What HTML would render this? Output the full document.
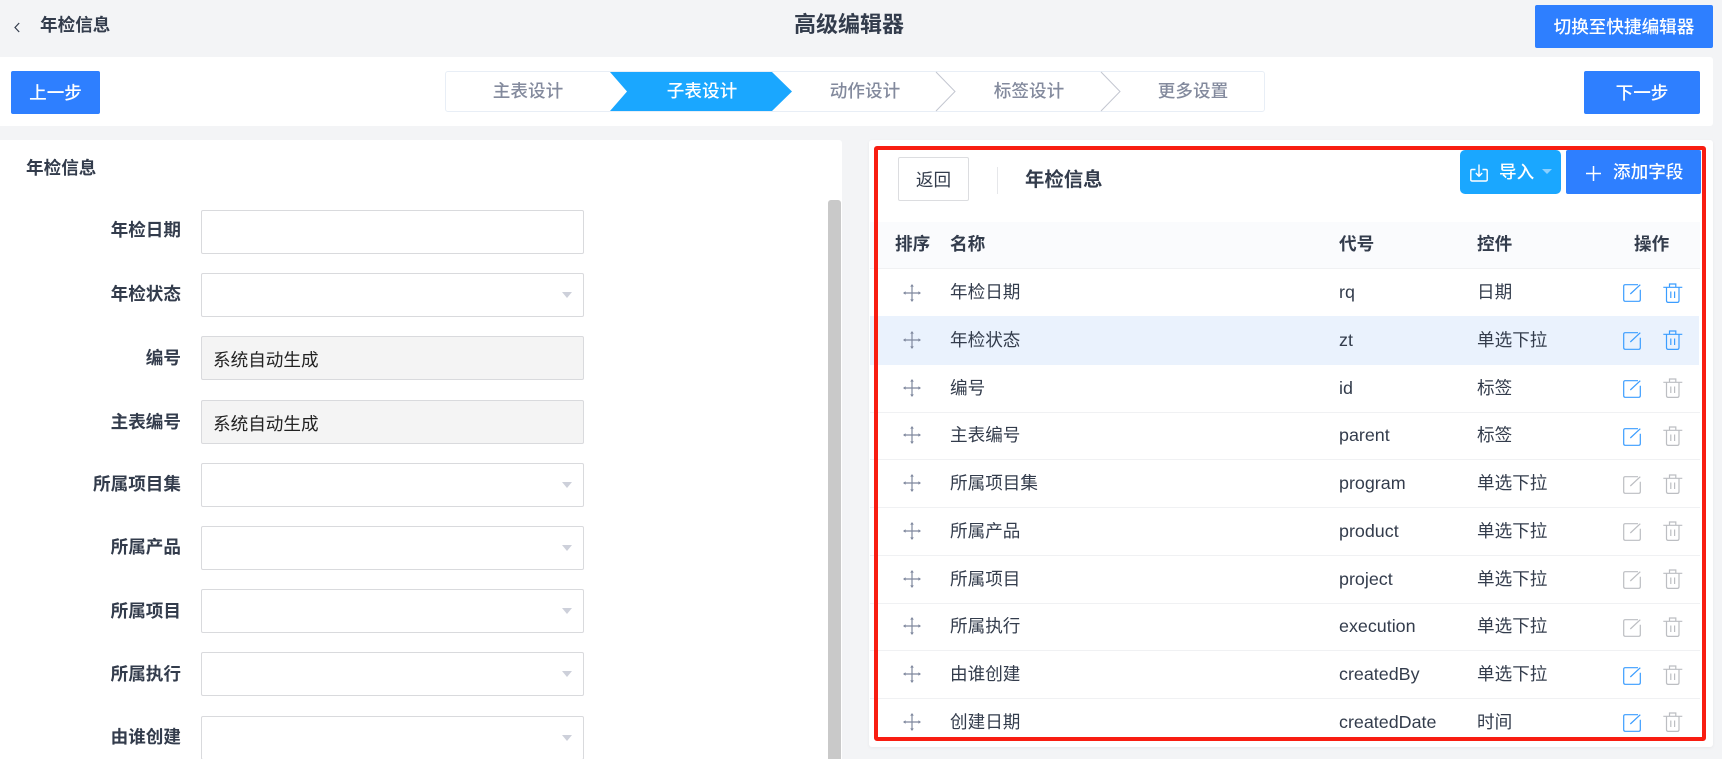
<!DOCTYPE html>
<html lang="zh-CN">
<head>
<meta charset="utf-8">
<title>高级编辑器</title>
<style>
html,body{margin:0;padding:0;width:1722px;height:759px;overflow:hidden;background:#f3f4f6;}
body{position:relative;font-family:"Liberation Sans","Noto Sans CJK SC",sans-serif;font-size:17.6px;color:#333c4c;}
.a{position:absolute;box-sizing:border-box;}
.t{position:absolute;white-space:nowrap;height:30px;line-height:30px;}
.b{font-weight:700;}
.m{font-weight:500;}
.w{color:#fff;}
.btn{position:absolute;box-sizing:border-box;background:#2e7fff;border-radius:2px;color:#fff;text-align:center;font-weight:500;}
.lab{position:absolute;left:60px;width:121px;text-align:right;height:30px;line-height:30px;font-weight:700;color:#333c4c;white-space:nowrap;}
.inp{position:absolute;left:201px;width:383px;height:44px;box-sizing:border-box;border:1px solid #d9dadd;border-radius:2px;background:#fff;}
.dis{background:#f4f4f4;line-height:46px;padding-left:11px;color:#222;}
.car{position:absolute;right:11px;top:18px;width:0;height:0;border-left:5px solid transparent;border-right:5px solid transparent;border-top:6px solid #cdd0da;}
.step{position:absolute;top:76px;height:30px;line-height:30px;width:120px;text-align:center;color:#838a9d;font-weight:500;}
.line{position:absolute;left:870px;width:830px;height:1px;background:#f0f1f3;}
.ic{position:absolute;width:18px;height:18px;overflow:visible;}
.mv{left:903px;}
.ed{left:1623px;}
.tr{left:1663px;width:20px;height:20px;}
.bl{color:#3b9dff;}
.gr{color:#bcbec2;}
.n{left:950px;}
.c{left:1339px;font-size:17.9px;}
.k{left:1477px;}
</style>
</head>
<body>
<svg width="0" height="0" style="position:absolute">
<defs>
<symbol id="mv" viewBox="0 0 18 18">
<path d="M9 1V17M1 9H17" fill="none" stroke="#7f889e" stroke-width="1.2"/>
<path d="M9 0L10.8 2.6H7.2ZM9 18L10.8 15.4H7.2ZM0 9L2.6 7.2V10.8ZM18 9L15.4 7.2V10.8Z" fill="#7f889e"/>
</symbol>
<symbol id="ed" viewBox="0 0 18 18">
<path d="M15 .7H2.2Q.7 .7 .7 2.2V15.8Q.7 17.3 2.2 17.3H15.8Q17.3 17.3 17.3 15.8V5.7" fill="none" stroke="currentColor" stroke-width="1.2"/>
<path d="M7.3 10L17.3 .7" fill="none" stroke="currentColor" stroke-width="1.2"/>
</symbol>
<symbol id="tr" viewBox="0 0 20 20">
<path d="M.3 4.3H19.3M6.5 4V1H12.8V4M3.5 4.5V17.6Q3.5 19.4 5.2 19.4H14.3Q16 19.4 16 17.6V4.5M7.8 8.5V15M11.6 8.5V15" fill="none" stroke="currentColor" stroke-width="1.2"/>
</symbol>
</defs>
</svg>

<!-- header -->
<svg class="a" style="left:13px;top:22px;width:8px;height:11px" viewBox="0 0 8 11"><path d="M6.2 1L2 5.5L6.2 10" fill="none" stroke="#333c4c" stroke-width="1.2"/></svg>
<div class="t b" style="left:40px;top:10px;">年检信息</div>
<div class="t b" style="left:794px;top:10px;font-size:22px;">高级编辑器</div>
<div class="btn" style="left:1535px;top:5px;width:178px;height:43px;line-height:44px;">切换至快捷编辑器</div>

<!-- steps bar -->
<div class="a" style="left:0;top:57px;width:1713px;height:69px;background:#fff;border-radius:0 3px 3px 0;"></div>
<div class="btn" style="left:11px;top:71px;width:89px;height:43px;line-height:44px;">上一步</div>
<div class="btn" style="left:1584px;top:71px;width:116px;height:43px;line-height:44px;">下一步</div>
<div class="a" style="left:445px;top:71px;width:820px;height:41px;border:1px solid #e8eef6;border-radius:3px;"></div>
<svg class="a" style="left:610px;top:71px;width:182px;height:41px;overflow:visible" viewBox="0 0 182 41">
<path d="M0 1H162L182 20.5L162 40H0L17 20.5Z" fill="#1aa7ff"/>
<path d="M326 1L345 20.5L326 40M491 1L510 20.5L491 40" fill="none" stroke="#c3c6d0" stroke-width="1"/>
</svg>
<div class="step" style="left:468px;">主表设计</div>
<div class="step" style="left:642px;color:#fff;">子表设计</div>
<div class="step" style="left:805px;">动作设计</div>
<div class="step" style="left:969px;">标签设计</div>
<div class="step" style="left:1133px;">更多设置</div>

<!-- left panel -->
<div class="a" style="left:0;top:140px;width:842px;height:619px;background:#fff;border-radius:0 3px 0 0;"></div>
<div class="a" style="left:828px;top:200px;width:13px;height:559px;background:#c9c9c9;border-radius:3px 3px 0 0;"></div>
<div class="t b" style="left:26px;top:153px;">年检信息</div>

<div class="lab" style="top:215px;">年检日期</div>
<div class="inp" style="top:210px;"></div>
<div class="lab" style="top:279px;">年检状态</div>
<div class="inp" style="top:273px;"><div class="car"></div></div>
<div class="lab" style="top:343px;">编号</div>
<div class="inp dis" style="top:336px;">系统自动生成</div>
<div class="lab" style="top:407px;">主表编号</div>
<div class="inp dis" style="top:400px;">系统自动生成</div>
<div class="lab" style="top:469px;">所属项目集</div>
<div class="inp" style="top:463px;"><div class="car"></div></div>
<div class="lab" style="top:532px;">所属产品</div>
<div class="inp" style="top:526px;"><div class="car"></div></div>
<div class="lab" style="top:596px;">所属项目</div>
<div class="inp" style="top:589px;"><div class="car"></div></div>
<div class="lab" style="top:659px;">所属执行</div>
<div class="inp" style="top:652px;"><div class="car"></div></div>
<div class="lab" style="top:722px;">由谁创建</div>
<div class="inp" style="top:716px;"><div class="car"></div></div>

<!-- right panel -->
<div class="a" style="left:869px;top:140px;width:844px;height:607px;background:#fff;border-radius:3px;box-shadow:0 1px 3px rgba(0,0,0,.05);"></div>
<div class="a" style="left:898px;top:157px;width:71px;height:44px;border:1px solid #dcdde0;border-radius:2px;text-align:center;line-height:44px;color:#333c4c;">返回</div>
<div class="a" style="left:997px;top:167px;width:1px;height:27px;background:#e6e7ea;"></div>
<div class="t b" style="left:1025px;top:165px;font-size:19.4px;">年检信息</div>

<div class="a" style="left:1460px;top:150px;width:101px;height:44px;background:#1aa7ff;border-radius:5px;"></div>
<svg class="a" style="left:1470px;top:164px;width:18px;height:18px" viewBox="0 0 18 18"><path d="M5.5 5.5H2Q.8 5.5 .8 6.7V15.8Q.8 17 2 17H16Q17.2 17 17.2 15.8V6.7Q17.2 5.5 16 5.5H12.5M9 .5V12M5.8 9L9 12.2L12.2 9" fill="none" stroke="#fff" stroke-width="1.4"/></svg>
<div class="t m w" style="left:1499px;top:157px;">导入</div>
<div class="a" style="left:1542px;top:169px;width:0;height:0;border-left:5px solid transparent;border-right:5px solid transparent;border-top:5px solid #8ad0ff;"></div>
<div class="a" style="left:1566px;top:150px;width:135px;height:44px;background:#2e7fff;border-radius:2px;"></div>
<svg class="a" style="left:1586px;top:166px;width:15px;height:15px" viewBox="0 0 15 15"><path d="M7.5 0V15M0 7.5H15" stroke="#fff" stroke-width="1.5"/></svg>
<div class="t m w" style="left:1613px;top:157px;">添加字段</div>

<!-- table -->
<div class="a" style="left:870px;top:222px;width:830px;height:46px;background:#fafbfd;"></div>
<div class="t b" style="left:895px;top:229px;">排序</div>
<div class="t b n" style="top:229px;">名称</div>
<div class="t b" style="left:1339px;top:229px;">代号</div>
<div class="t b k" style="top:229px;">控件</div>
<div class="t b" style="left:1634px;top:229px;">操作</div>

<div class="line" style="top:268px;"></div>
<div class="a" style="left:870px;top:316px;width:829px;height:49px;background:#eaf2fd;"></div>
<div class="line" style="top:412px;"></div>
<div class="line" style="top:459px;"></div>
<div class="line" style="top:507px;"></div>
<div class="line" style="top:555px;"></div>
<div class="line" style="top:603px;"></div>
<div class="line" style="top:650px;"></div>
<div class="line" style="top:698px;"></div>

<div class="t n" style="top:277px;">年检日期</div><div class="t c" style="top:277px;">rq</div><div class="t k" style="top:277px;">日期</div>
<svg class="ic mv" style="top:284px;"><use href="#mv"/></svg><svg class="ic ed bl" style="top:284px;"><use href="#ed"/></svg><svg class="ic tr bl" style="top:283px;"><use href="#tr"/></svg>

<div class="t n" style="top:325px;">年检状态</div><div class="t c" style="top:325px;">zt</div><div class="t k" style="top:325px;">单选下拉</div>
<svg class="ic mv" style="top:331px;"><use href="#mv"/></svg><svg class="ic ed bl" style="top:332px;"><use href="#ed"/></svg><svg class="ic tr bl" style="top:330px;"><use href="#tr"/></svg>

<div class="t n" style="top:373px;">编号</div><div class="t c" style="top:373px;">id</div><div class="t k" style="top:373px;">标签</div>
<svg class="ic mv" style="top:379px;"><use href="#mv"/></svg><svg class="ic ed bl" style="top:380px;"><use href="#ed"/></svg><svg class="ic tr gr" style="top:378px;"><use href="#tr"/></svg>

<div class="t n" style="top:420px;">主表编号</div><div class="t c" style="top:420px;">parent</div><div class="t k" style="top:420px;">标签</div>
<svg class="ic mv" style="top:426px;"><use href="#mv"/></svg><svg class="ic ed bl" style="top:428px;"><use href="#ed"/></svg><svg class="ic tr gr" style="top:426px;"><use href="#tr"/></svg>

<div class="t n" style="top:468px;">所属项目集</div><div class="t c" style="top:468px;">program</div><div class="t k" style="top:468px;">单选下拉</div>
<svg class="ic mv" style="top:474px;"><use href="#mv"/></svg><svg class="ic ed gr" style="top:476px;"><use href="#ed"/></svg><svg class="ic tr gr" style="top:474px;"><use href="#tr"/></svg>

<div class="t n" style="top:516px;">所属产品</div><div class="t c" style="top:516px;">product</div><div class="t k" style="top:516px;">单选下拉</div>
<svg class="ic mv" style="top:522px;"><use href="#mv"/></svg><svg class="ic ed gr" style="top:523px;"><use href="#ed"/></svg><svg class="ic tr gr" style="top:521px;"><use href="#tr"/></svg>

<div class="t n" style="top:564px;">所属项目</div><div class="t c" style="top:564px;">project</div><div class="t k" style="top:564px;">单选下拉</div>
<svg class="ic mv" style="top:570px;"><use href="#mv"/></svg><svg class="ic ed gr" style="top:571px;"><use href="#ed"/></svg><svg class="ic tr gr" style="top:569px;"><use href="#tr"/></svg>

<div class="t n" style="top:611px;">所属执行</div><div class="t c" style="top:611px;">execution</div><div class="t k" style="top:611px;">单选下拉</div>
<svg class="ic mv" style="top:617px;"><use href="#mv"/></svg><svg class="ic ed gr" style="top:619px;"><use href="#ed"/></svg><svg class="ic tr gr" style="top:617px;"><use href="#tr"/></svg>

<div class="t n" style="top:659px;">由谁创建</div><div class="t c" style="top:659px;">createdBy</div><div class="t k" style="top:659px;">单选下拉</div>
<svg class="ic mv" style="top:665px;"><use href="#mv"/></svg><svg class="ic ed bl" style="top:667px;"><use href="#ed"/></svg><svg class="ic tr gr" style="top:665px;"><use href="#tr"/></svg>

<div class="t n" style="top:707px;">创建日期</div><div class="t c" style="top:707px;">createdDate</div><div class="t k" style="top:707px;">时间</div>
<svg class="ic mv" style="top:713px;"><use href="#mv"/></svg><svg class="ic ed bl" style="top:714px;"><use href="#ed"/></svg><svg class="ic tr gr" style="top:712px;"><use href="#tr"/></svg>

<!-- red highlight frame -->
<div class="a" style="left:874px;top:146px;width:832px;height:595px;border:4px solid #f81d11;border-radius:3px;"></div>
</body>
</html>
